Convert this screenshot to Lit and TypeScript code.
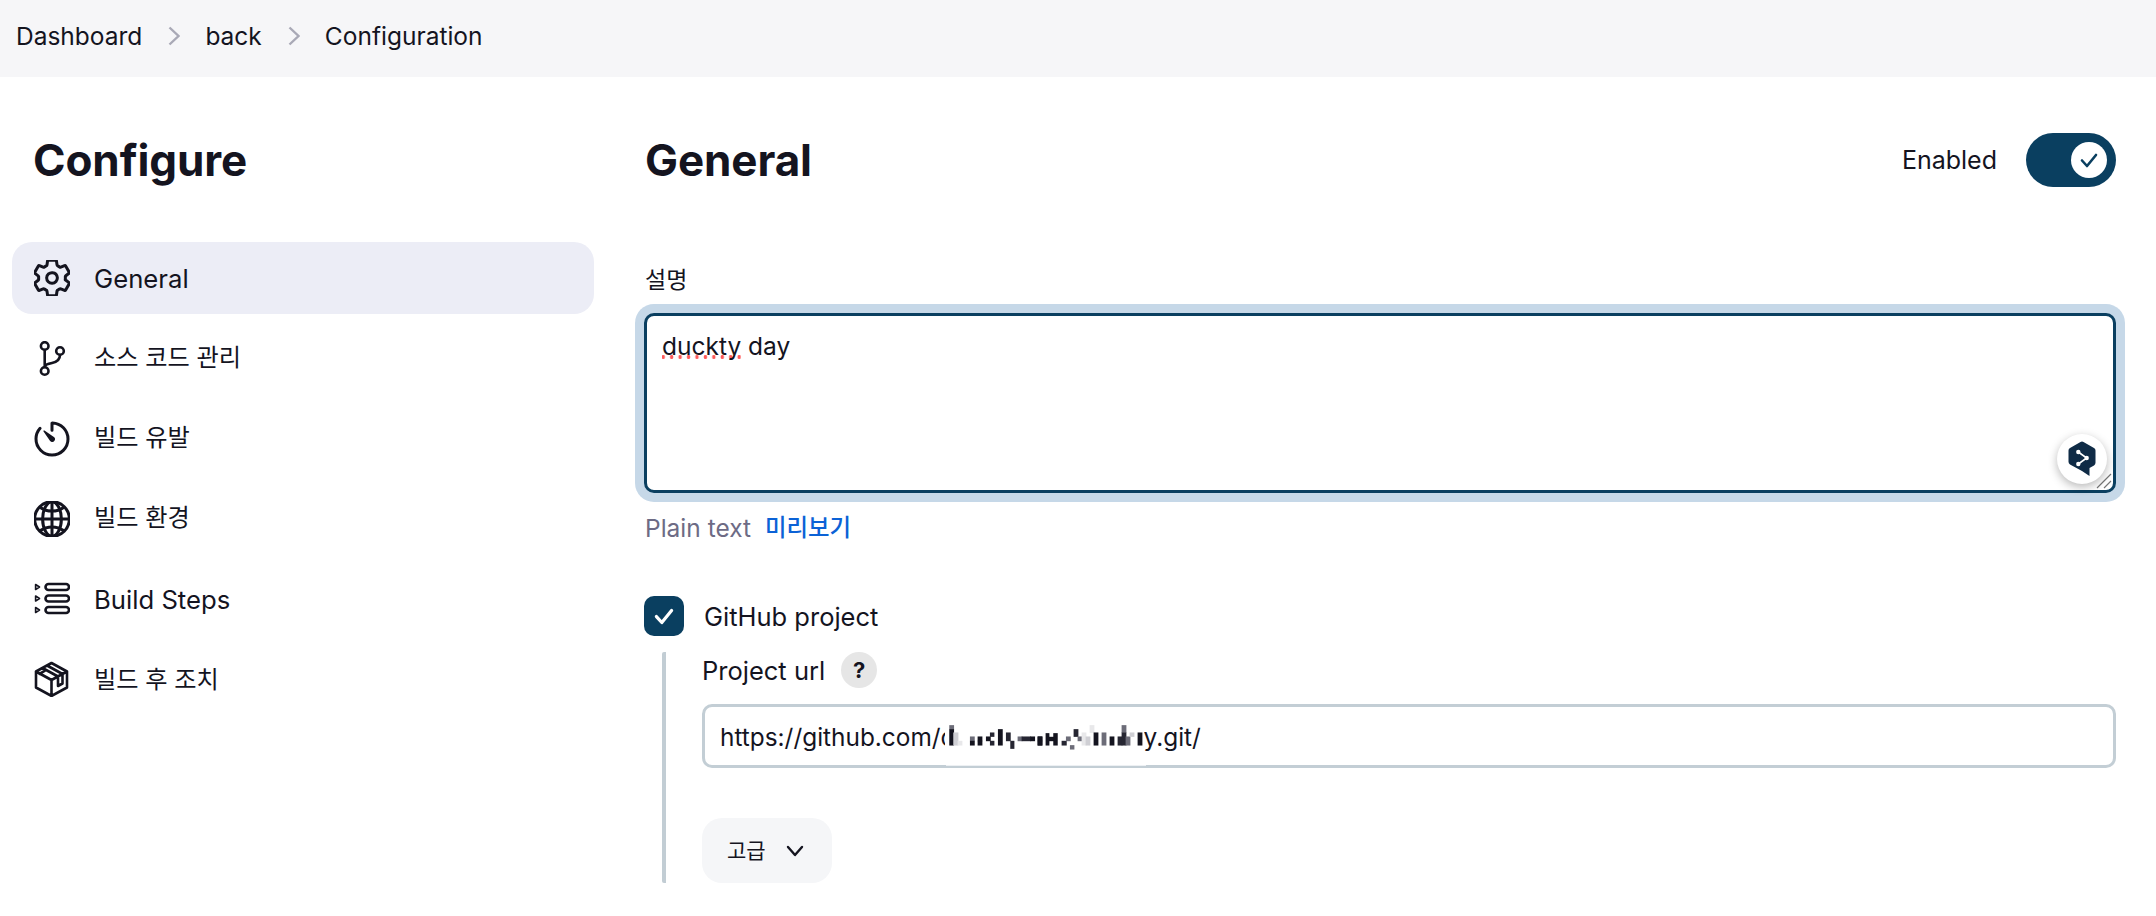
import { LitElement, html, css, svg } from "lit";
import { customElement } from "lit/decorators.js";

const D = "#14141f", M = "#262632", G = "#6c6c78", L = "#cfcfd4", X = "#e8e8ea";
// [x0, x1, y0, y1, colour, originX] in 3x crop coordinates
const cells: [number, number, number, number, string, number][] = [
  [35, 47, 28, 40, G, 940], [35, 47, 40, 88, D, 940], [47, 60, 50, 88, L, 940], [60, 72, 75, 88, X, 940],
  [97, 109, 62, 75, G, 940], [97, 109, 75, 88, D, 940], [120, 132, 62, 75, D, 940], [120, 132, 75, 88, D, 940],
  [145, 157, 62, 75, D, 940], [157, 168, 50, 62, M, 940], [157, 168, 75, 88, M, 940],
  [181, 193, 40, 88, D, 940], [205, 217, 50, 75, M, 940], [218, 228, 75, 98, M, 940],
  [240, 252, 62, 75, G, 940], [252, 278, 62, 75, M, 940], [278, 290, 62, 75, D, 940],
  [300, 312, 62, 88, D, 940],
  [0, 12, 62, 75, D, 1040], [0, 12, 75, 88, D, 1040], [24, 33, 52, 88, D, 1040], [33, 47, 63, 75, D, 1040],
  [47, 58, 52, 88, D, 1040], [72, 85, 75, 88, M, 1040], [85, 97, 62, 75, G, 1040], [97, 108, 88, 100, G, 1040],
  [108, 120, 40, 62, M, 1040], [120, 132, 62, 75, G, 1040], [132, 144, 50, 88, X, 1040], [144, 156, 62, 88, L, 1040],
  [156, 168, 28, 50, X, 1040], [168, 180, 50, 88, D, 1040], [192, 204, 50, 88, G, 1040],
  [216, 228, 62, 88, D, 1040], [240, 252, 62, 88, M, 1040], [252, 264, 28, 50, G, 1040],
  [252, 264, 50, 88, M, 1040], [264, 276, 62, 88, G, 1040], [276, 288, 50, 62, L, 1040], [300, 312, 50, 88, D, 1040],
];

const icoView = "40 40 432 432";
const icons = {
  gear: html`<svg class="ion" viewBox=${icoView}><path d="M262.29 192.31a64 64 0 1057.4 57.4 64.13 64.13 0 00-57.4-57.4zM416.39 256a154.34 154.34 0 01-1.53 20.79l45.21 35.46a10.81 10.81 0 012.45 13.75l-42.77 74a10.81 10.81 0 01-13.14 4.59l-44.9-18.08a16.11 16.11 0 00-15.17 1.75A164.48 164.48 0 01325 400.8a15.94 15.94 0 00-8.82 12.14l-6.73 47.89a11.08 11.08 0 01-10.68 9.17h-85.54a11.11 11.11 0 01-10.69-8.87l-6.72-47.82a16.07 16.07 0 00-9-12.22 155.3 155.3 0 01-21.46-12.57 16 16 0 00-15.11-1.71l-44.89 18.07a10.81 10.81 0 01-13.14-4.58l-42.77-74a10.8 10.8 0 012.45-13.75l38.21-30a16.05 16.05 0 006-14.08c-.36-4.17-.58-8.33-.58-12.5s.21-8.27.58-12.35a16 16 0 00-6.07-13.94l-38.19-30A10.81 10.81 0 0149.48 186l42.77-74a10.81 10.81 0 0113.14-4.59l44.9 18.08a16.11 16.11 0 0015.17-1.75A164.48 164.48 0 01187 111.2a15.94 15.94 0 008.82-12.14l6.73-47.89A11.08 11.08 0 01213.23 42h85.54a11.11 11.11 0 0110.69 8.87l6.72 47.82a16.07 16.07 0 009 12.22 155.3 155.3 0 0121.46 12.57 16 16 0 0015.11 1.71l44.89-18.07a10.81 10.81 0 0113.14 4.58l42.77 74a10.8 10.8 0 01-2.45 13.75l-38.21 30a16.05 16.05 0 00-6.05 14.08c.33 4.14.55 8.3.55 12.47z"/></svg>`,
  git: html`<svg class="ion thin" viewBox="0 0 36 36"><circle cx="10.7" cy="5" r="3.8"/><circle cx="26" cy="10" r="3.8"/><circle cx="10.7" cy="30" r="3.8"/><path d="M10.7 9v17M26 14c0 5-3 7-8 8-4 .8-7.3 1.500-7.3 4"/></svg>`,
  timer: html`<svg class="ion" viewBox=${icoView}><path d="M112.91 128A191.85 191.85 0 0064 254c-1.18 106.35 85.65 193.8 192 194 106.2.2 192-85.83 192-192 0-104.54-83.55-189.61-187.5-192a4.36 4.36 0 00-4.5 4.37V152"/><path class="fill" d="M233.38 278.63l-79-113a8.13 8.13 0 0111.32-11.32l113 79a32.5 32.5 0 01-37 53.34 33.21 33.21 0 01-8.32-8.02z"/></svg>`,
  globe: html`<svg class="ion" viewBox=${icoView}><path d="M256 48C141.13 48 48 141.13 48 256s93.13 208 208 208 208-93.13 208-208S370.87 48 256 48z"/><path d="M256 48c-58.07 0-112.67 93.13-112.67 208S197.93 464 256 464s112.67-93.13 112.67-208S314.07 48 256 48z"/><path d="M117.33 117.33c38.24 27.15 86.38 43.34 138.67 43.34s100.43-16.19 138.67-43.34M394.67 394.67c-38.24-27.15-86.38-43.34-138.67-43.34s-100.43 16.19-138.67 43.34"/><path d="M256 48v416M464 256H48"/></svg>`,
  steps: html`<svg class="ion thin" viewBox="0 0 36 36"><path d="M1.600 3.500 5.500 6 1.600 8.500zM1.600 15 5.500 17.500 1.600 20zM1.600 26.500 5.500 29 1.600 31.500z" stroke-width="1.600"/><rect x="11.500" y="3" width="23.500" height="6" rx="3"/><rect x="11.500" y="14.500" width="23.500" height="6" rx="3"/><rect x="11.500" y="26" width="23.500" height="6" rx="3"/></svg>`,
  box: html`<svg class="ion thin" viewBox="0 0 36 36"><path d="M17.500 2 33 10.500v16L17.500 35 2 26.500v-16zM2 10.500 17.500 19 33 10.500M17.500 19v16M8.500 7 24 15.500V25l4.500-2.500V13L13 4.500M11 9.700 5.500 12.800"/></svg>`,
};

const nav: [keyof typeof icons, string, string][] = [
  ["gear", "General", "latin"], ["git", "소스 코드 관리", ""], ["timer", "빌드 유발", ""],
  ["globe", "빌드 환경", ""], ["steps", "Build Steps", "latin low"], ["box", "빌드 후 조치", "low"],
];

const chevron = html`<svg class="crumb-chev" viewBox="0 0 12 20"><path d="M1.500 1.500 10.500 10l-9 8.500"/></svg>`;
const tick = (cls: string) => html`<svg class=${cls} viewBox="0 0 24 24"><path d="M5 12.500l5 5.500 9-11"/></svg>`;

@customElement("app-root")
export class AppRoot extends LitElement {
  static styles = css`
    :host { display: block; width: 2156px; height: 916px; overflow: hidden; background: #fff; color: #14141f;
      font-family: Inter, "Noto Sans CJK KR", sans-serif; font-size: 24px; line-height: 30px; }
    .crumbs { height: 77px; background: #f6f6f8; display: flex; align-items: center; padding: 0 0 5px 16px; box-sizing: border-box; font-size: 24.500px; }
    .crumb-chev { width: 12px; height: 20px; margin: 0 25px 0 26px; fill: none; stroke: #a9a9b6; stroke-width: 2.400; }
    .layout { display: flex; }
    .side { width: 582px; margin-left: 12px; flex: none; padding-top: 56px; }
    h1, h2 { margin: 0; font-size: 44px; line-height: 54px; font-weight: 700; letter-spacing: -0.1px; }
    h1 { margin-left: 21px; }
    .nav { margin-top: 55px; display: flex; flex-direction: column; gap: 9px; }
    .item { height: 71px; border-radius: 20px; display: flex; align-items: center; padding-left: 22px; gap: 24px; }
    .item.on { background: #ecedf6; height: 72px; margin-bottom: -1px; }
    .item span { line-height: 30px; font-size: 24.200px; }
    .item span.latin { font-size: 25.700px; padding-top: 2px; }
    .item span.low { padding-top: 4px; }
    .ion { width: 36px; height: 36px; flex: none; fill: none; stroke: #14141f; stroke-width: 36; stroke-linecap: round; stroke-linejoin: round; margin-top: 3px; }
    .item.on .ion { margin-top: 0; }
    .ion.thin { stroke-width: 2.600; }
    .ion .fill { fill: #14141f; stroke: none; }
    .main { margin-left: 51px; width: 1471px; padding-top: 56px; }
    .head { display: flex; justify-content: space-between; align-items: center; height: 54px; }
    .enabled { display: flex; align-items: center; gap: 29px; font-size: 25px; }
    .toggle { width: 90px; height: 54px; border-radius: 27px; background: #0a3f60; display: flex; align-items: center; justify-content: flex-end; padding-right: 9px; box-sizing: border-box; }
    .knob { width: 36px; height: 36px; border-radius: 50%; background: #fff; display: flex; align-items: center; justify-content: center; }
    .tick-dark { width: 24px; height: 24px; fill: none; stroke: #0a3f60; stroke-width: 2.600; stroke-linecap: round; stroke-linejoin: round; }
    .tick-light { width: 26px; height: 26px; fill: none; stroke: #fff; stroke-width: 3; stroke-linecap: round; stroke-linejoin: round; }
    .label { margin-top: 78px; height: 30px; font-size: 23px; }
    .area { position: relative; margin: 18px 0 0 -1px; height: 180px; box-sizing: border-box; border: 3px solid #0a3f60; border-radius: 10px; box-shadow: 0 0 0 9px #c6d8e8; padding: 15px 15px; background: #fff; font-size: 24.500px; }
    .typo { background-image: radial-gradient(circle, #ff5a5a 1.700px, transparent 2px); background-size: 8.450px 4px; background-repeat: repeat-x; background-position: -3px calc(100% - 2px); }
    .grip { position: absolute; right: 1px; bottom: 1px; width: 16px; height: 16px; fill: none; stroke: #777; stroke-width: 1.200; }
    .deepl { position: absolute; left: 1410px; top: 118px; width: 50px; height: 50px; border-radius: 50%; background: #fff; box-shadow: 0 3px 10px rgba(0,0,0,.28); }
    .deepl svg { display: block; width: 50px; height: 50px; }
    .hint { margin-top: 20px; display: flex; gap: 14px; font-size: 24.500px; }
    .hint .plain { color: #6d6b85; }
    .hint .link { color: #0b62d6; font-size: 23.400px; font-weight: 500; }
    .check { margin: 53px 0 0 -1px; display: flex; align-items: center; gap: 20px; height: 40px; }
    .check span { font-size: 25.500px; padding-top: 2px; }
    .box { width: 40px; height: 40px; border-radius: 10px; background: #0a3f60; display: flex; align-items: center; justify-content: center; }
    .nested { margin: 16px 0 0 17px; border-left: 4px solid #c2cdd4; border-radius: 2px; padding-left: 36px; height: 231px; }
    .url-label { display: flex; align-items: center; gap: 16px; height: 36px; }
    .url-label .name { font-size: 25.500px; padding-top: 2px; }
    .help { width: 36px; height: 36px; border-radius: 50%; background: #e6e6e6; font-size: 22px; font-weight: 700; text-align: center; line-height: 36px; }
    .input { position: relative; margin-top: 16px; height: 64px; box-sizing: border-box; border: 3px solid #c3ced5; border-radius: 10px; display: flex; align-items: center; padding: 2px 0 0 15px; white-space: nowrap; font-size: 24.400px; }
    .input::after { content: ""; position: absolute; left: 241px; width: 200px; bottom: -1px; height: 1px; background: #fff; opacity: .7; }
    .first { width: 4px; }
    .mosaic { width: 199px; height: 34px; flex: none; background: #fff; position: relative; }
    .more { margin-top: 50px; width: 130px; height: 65px; border-radius: 20px; background: #f5f6f8; display: flex; align-items: center; padding-left: 25px; box-sizing: border-box; gap: 20px; font-size: 21px; }
    .more svg { width: 18px; height: 12px; fill: none; stroke: #14141f; stroke-width: 2.400; stroke-linecap: round; stroke-linejoin: round; }
  `;

  render() {
    return html`
      <div class="crumbs">
        <span>Dashboard</span>${chevron}<span>back</span>${chevron}<span>Configuration</span>
      </div>
      <div class="layout">
        <aside class="side">
          <h1>Configure</h1>
          <div class="nav">
            ${nav.map(([ic, label, cls], i) => html`<div class="item ${i === 0 ? "on" : ""}">${icons[ic]}<span class=${cls}>${label}</span></div>`)}
          </div>
        </aside>
        <main class="main">
          <div class="head">
            <h2>General</h2>
            <div class="enabled">Enabled<div class="toggle"><div class="knob">${tick("tick-dark")}</div></div></div>
          </div>
          <div class="label">설명</div>
          <div class="area">
            <span class="typo">duckty</span> day
            <svg class="grip" viewBox="0 0 16 16"><path d="M15 1 1 15M15 8 8 15"/></svg>
            <div class="deepl"><svg viewBox="0 0 50 50">
              <path fill="#0f2b46" d="M23.500 7.900a3 3 0 013 0L37 14a3 3 0 011.500 2.600v12.200a3 3 0 01-1.500 2.600l-4.500 2.600V42l-7.500-5-12-6.600a3 3 0 01-1.500-2.600V16.600a3 3 0 011.500-2.600z"/>
              <path fill="none" stroke="#fff" stroke-width="1.600" d="M21.300 18l8.400 6-8.400 6"/>
              <circle cx="21.300" cy="18" r="2.200" fill="#fff"/><circle cx="29.700" cy="24" r="2.200" fill="#fff"/><circle cx="21.300" cy="30" r="2.200" fill="#fff"/>
            </svg></div>
          </div>
          <div class="hint"><span class="plain">Plain text</span><span class="link">미리보기</span></div>
          <div class="check"><div class="box">${tick("tick-light")}</div><span>GitHub project</span></div>
          <div class="nested">
            <div class="url-label"><span class="name">Project url</span><span class="help">?</span></div>
            <div class="input">
              <span>https://github.com/</span><span class="first">d</span>
              <svg class="mosaic" viewBox="0 0 199 34">
                ${cells.map(([a, b, c, d, col, ox]) => svg`<rect x=${ox + a / 3 - 947 - 0.4} y=${715 + c / 3 - 719 - 0.2} width=${(b - a) / 3 + 0.8} height=${(d - c) / 3 + 0.4} fill=${col}/>`)}
              </svg>
              <span>y.git/</span>
            </div>
            <div class="more"><span>고급</span><svg viewBox="0 0 18 12"><path d="M2 2l7 8 7-8"/></svg></div>
          </div>
        </main>
      </div>
    `;
  }
}
